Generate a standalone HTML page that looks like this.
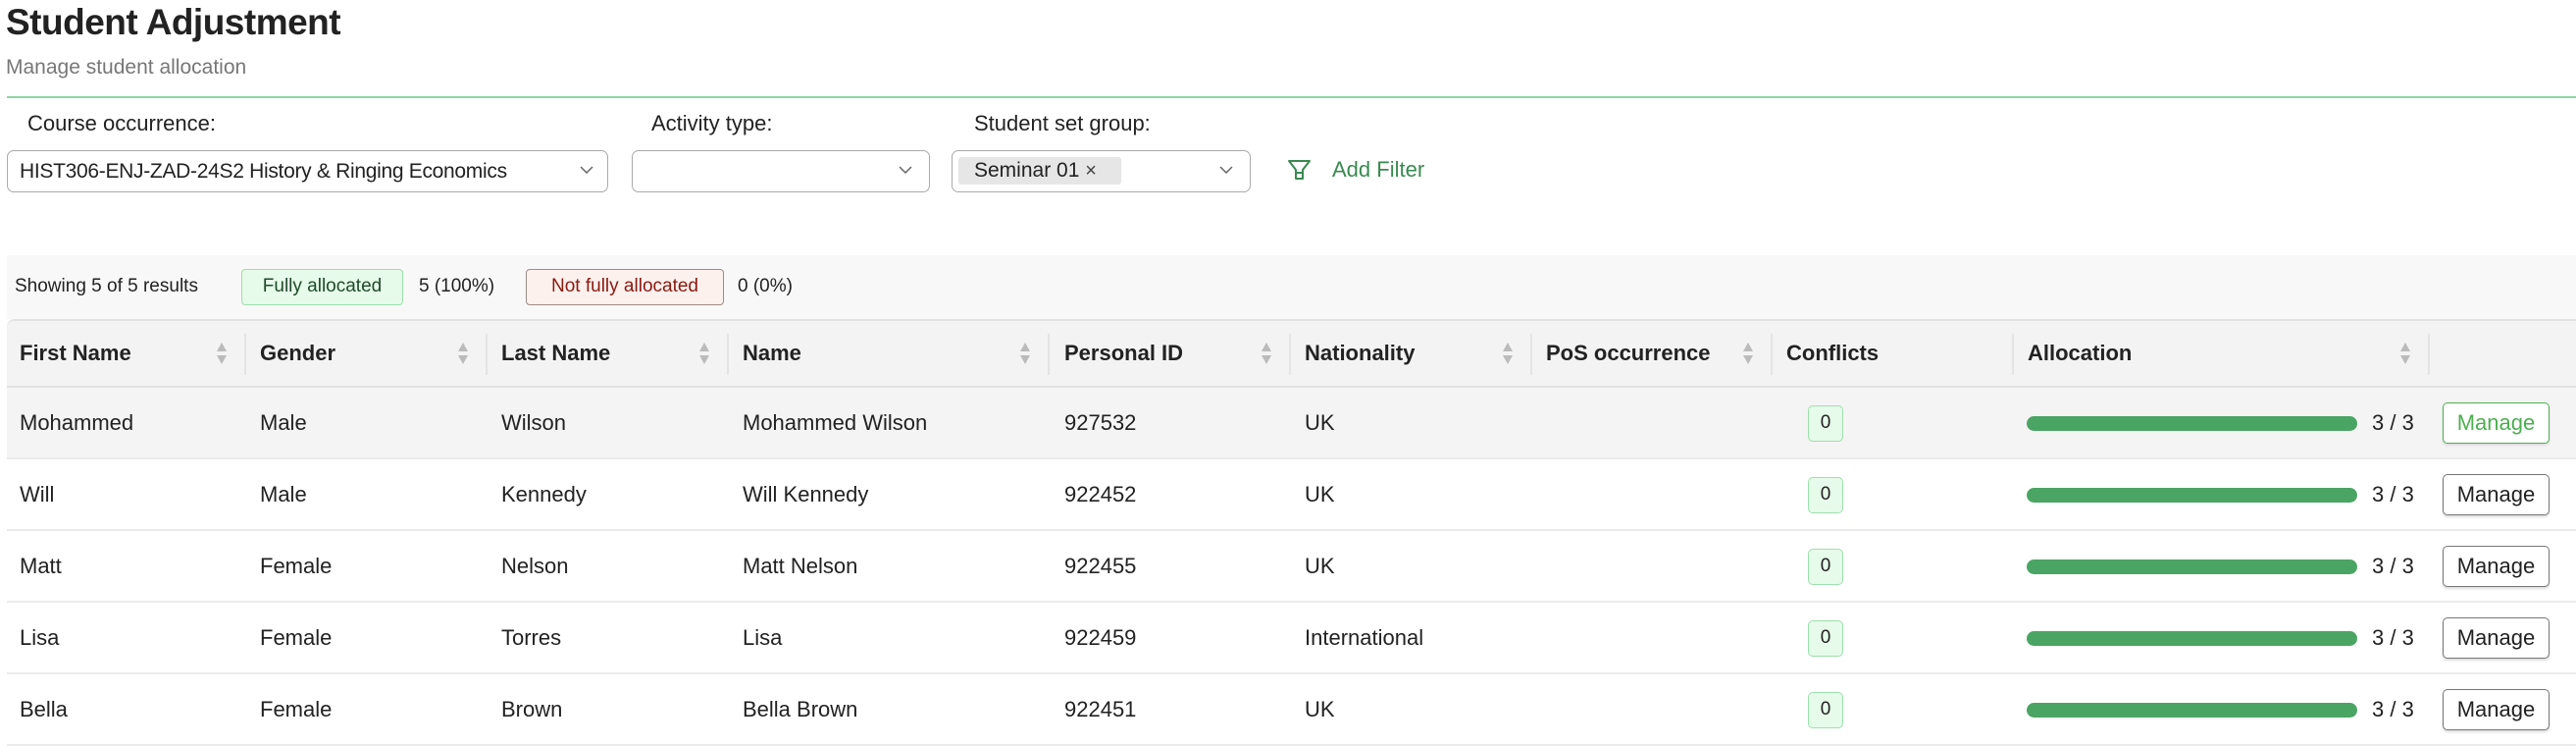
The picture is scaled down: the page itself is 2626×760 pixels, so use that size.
<!DOCTYPE html>
<html><head><meta charset="utf-8"><style>
*{margin:0;padding:0;box-sizing:border-box}
body{width:2626px;height:760px;background:#fff;font-family:"Liberation Sans",sans-serif;color:#222;position:relative;overflow:hidden}
.a{position:absolute;white-space:nowrap}
.sel{position:absolute;border:1.5px solid #aaa;border-radius:7px;background:#fff;height:43px;top:153px}
.chev{position:absolute;top:12px;width:14px;height:14px}
.hd{position:absolute;top:325px;height:70px;left:7px;right:0;background:#f3f3f3;border-top:2px solid #e2e2e2;border-bottom:2px solid #e2e2e2;border-radius:8px 0 0 0}
.ht{position:absolute;top:347px;font-weight:bold;font-size:22px}
.sep{position:absolute;top:340px;width:2px;height:42px;background:#e4e4e4}
.srt{position:absolute;top:348px;width:12px;height:24px}
.row{position:absolute;left:7px;right:0;height:73px;border-bottom:2px solid #ebebeb}
.c{position:absolute;font-size:22px}
.badge{position:absolute;width:36px;height:37px;background:#e6fbe9;border:1.5px solid #9ddfae;border-radius:5px;font-size:19px;text-align:center;line-height:34px}
.bar{position:absolute;width:337px;height:15px;background:#4aa564;border-radius:8px}
.btn{position:absolute;width:109px;height:42px;border:1.5px solid #777;border-radius:5px;font-size:22px;text-align:center;line-height:39px;background:#fff;box-shadow:0 2px 2px #ddd}
</style></head><body>
<div class="a" style="left:6px;top:2px;font-size:37px;font-weight:bold;color:#222;letter-spacing:-0.5px">Student Adjustment</div>
<div class="a" style="left:6px;top:57px;font-size:21px;color:#777">Manage student allocation</div>
<div class="a" style="left:7px;right:0;top:98px;height:2px;background:#8fd4a0"></div>

<div class="a" style="left:28px;top:113px;font-size:22px">Course occurrence:</div>
<div class="a" style="left:664px;top:113px;font-size:22px">Activity type:</div>
<div class="a" style="left:993px;top:113px;font-size:22px">Student set group:</div>

<div class="sel" style="left:7px;width:613px"><div class="a" style="left:12px;top:9px;font-size:21px;letter-spacing:-0.3px">HIST306-ENJ-ZAD-24S2 History &amp; Ringing Economics</div>
<svg class="chev" style="right:14px" viewBox="0 0 14 14"><path d="M1 4l6 6 6-6" fill="none" stroke="#666" stroke-width="1.5"/></svg></div>
<div class="sel" style="left:644px;width:304px"><svg class="chev" style="right:17px" viewBox="0 0 14 14"><path d="M1 4l6 6 6-6" fill="none" stroke="#666" stroke-width="1.5"/></svg></div>
<div class="sel" style="left:970px;width:305px"><div class="a" style="left:6px;top:6px;width:166px;height:28px;background:#e6e6e6;border-radius:3px;font-size:21px;line-height:28px;padding-left:16px">Seminar 01 <span style="font-size:20px;color:#444">×</span></div>
<svg class="chev" style="right:17px" viewBox="0 0 14 14"><path d="M1 4l6 6 6-6" fill="none" stroke="#666" stroke-width="1.5"/></svg></div>

<svg class="a" style="left:1312px;top:162px" width="26" height="24" viewBox="0 0 26 24"><path d="M2 2h21l-7 9v9h-7v-9z" fill="none" stroke="#3a8a50" stroke-width="2" stroke-linejoin="round"/><path d="M9 14h7" stroke="#3a8a50" stroke-width="2"/></svg>
<div class="a" style="left:1358px;top:160px;font-size:22px;color:#3a8a50">Add Filter</div>

<div class="a" style="left:7px;right:0;top:260px;height:65px;background:#f8f8f8"></div>
<div class="a" style="left:15px;top:281px;font-size:19px">Showing 5 of 5 results</div>
<div class="a" style="left:246px;top:274px;width:165px;height:37px;background:#e6fbe9;border:1.5px solid #9ddfae;border-radius:4px;font-size:19px;line-height:34px;text-align:center;color:#1f4a2a">Fully allocated</div>
<div class="a" style="left:427px;top:281px;font-size:19px">5 (100%)</div>
<div class="a" style="left:536px;top:274px;width:202px;height:37px;background:#fdf1ee;border:1.5px solid #a08a86;border-radius:4px;font-size:19px;line-height:34px;text-align:center;color:#8a1a10">Not fully allocated</div>
<div class="a" style="left:752px;top:281px;font-size:19px">0 (0%)</div>

<div class="hd"></div>
<div class="ht" style="left:20px">First Name</div>
<div class="ht" style="left:265px">Gender</div>
<div class="ht" style="left:511px">Last Name</div>
<div class="ht" style="left:757px">Name</div>
<div class="ht" style="left:1085px">Personal ID</div>
<div class="ht" style="left:1330px">Nationality</div>
<div class="ht" style="left:1576px">PoS occurrence</div>
<div class="ht" style="left:1821px">Conflicts</div>
<div class="ht" style="left:2067px">Allocation</div>
<div class="sep" style="left:249px"></div><div class="sep" style="left:495px"></div><div class="sep" style="left:741px"></div><div class="sep" style="left:1068px"></div><div class="sep" style="left:1314px"></div><div class="sep" style="left:1560px"></div><div class="sep" style="left:1805px"></div><div class="sep" style="left:2051px"></div><div class="sep" style="left:2475px"></div>
<svg class="srt" style="left:220px" viewBox="0 0 12 24"><path d="M6 1l5 9H1z M6 23l5-9H1z" fill="#bbb"/></svg>
<svg class="srt" style="left:466px" viewBox="0 0 12 24"><path d="M6 1l5 9H1z M6 23l5-9H1z" fill="#bbb"/></svg>
<svg class="srt" style="left:712px" viewBox="0 0 12 24"><path d="M6 1l5 9H1z M6 23l5-9H1z" fill="#bbb"/></svg>
<svg class="srt" style="left:1039px" viewBox="0 0 12 24"><path d="M6 1l5 9H1z M6 23l5-9H1z" fill="#bbb"/></svg>
<svg class="srt" style="left:1285px" viewBox="0 0 12 24"><path d="M6 1l5 9H1z M6 23l5-9H1z" fill="#bbb"/></svg>
<svg class="srt" style="left:1531px" viewBox="0 0 12 24"><path d="M6 1l5 9H1z M6 23l5-9H1z" fill="#bbb"/></svg>
<svg class="srt" style="left:1776px" viewBox="0 0 12 24"><path d="M6 1l5 9H1z M6 23l5-9H1z" fill="#bbb"/></svg>
<svg class="srt" style="left:2446px" viewBox="0 0 12 24"><path d="M6 1l5 9H1z M6 23l5-9H1z" fill="#bbb"/></svg>

<div class="row" style="top:395px;background:#f4f4f4"></div>
<div class="row" style="top:468px"></div>
<div class="row" style="top:541px"></div>
<div class="row" style="top:614px"></div>
<div class="row" style="top:687px"></div>

<div class="c" style="left:20px;top:418px">Mohammed</div><div class="c" style="left:265px;top:418px">Male</div><div class="c" style="left:511px;top:418px">Wilson</div><div class="c" style="left:757px;top:418px">Mohammed Wilson</div><div class="c" style="left:1085px;top:418px">927532</div><div class="c" style="left:1330px;top:418px">UK</div>
<div class="badge" style="left:1843px;top:413px">0</div><div class="bar" style="left:2066px;top:424px"></div><div class="c" style="left:2418px;top:418px">3 / 3</div><div class="btn" style="left:2490px;top:410px;border-color:#4caf50;color:#4caf50">Manage</div>

<div class="c" style="left:20px;top:491px">Will</div><div class="c" style="left:265px;top:491px">Male</div><div class="c" style="left:511px;top:491px">Kennedy</div><div class="c" style="left:757px;top:491px">Will Kennedy</div><div class="c" style="left:1085px;top:491px">922452</div><div class="c" style="left:1330px;top:491px">UK</div>
<div class="badge" style="left:1843px;top:486px">0</div><div class="bar" style="left:2066px;top:497px"></div><div class="c" style="left:2418px;top:491px">3 / 3</div><div class="btn" style="left:2490px;top:483px">Manage</div>

<div class="c" style="left:20px;top:564px">Matt</div><div class="c" style="left:265px;top:564px">Female</div><div class="c" style="left:511px;top:564px">Nelson</div><div class="c" style="left:757px;top:564px">Matt Nelson</div><div class="c" style="left:1085px;top:564px">922455</div><div class="c" style="left:1330px;top:564px">UK</div>
<div class="badge" style="left:1843px;top:559px">0</div><div class="bar" style="left:2066px;top:570px"></div><div class="c" style="left:2418px;top:564px">3 / 3</div><div class="btn" style="left:2490px;top:556px">Manage</div>

<div class="c" style="left:20px;top:637px">Lisa</div><div class="c" style="left:265px;top:637px">Female</div><div class="c" style="left:511px;top:637px">Torres</div><div class="c" style="left:757px;top:637px">Lisa</div><div class="c" style="left:1085px;top:637px">922459</div><div class="c" style="left:1330px;top:637px">International</div>
<div class="badge" style="left:1843px;top:632px">0</div><div class="bar" style="left:2066px;top:643px"></div><div class="c" style="left:2418px;top:637px">3 / 3</div><div class="btn" style="left:2490px;top:629px">Manage</div>

<div class="c" style="left:20px;top:710px">Bella</div><div class="c" style="left:265px;top:710px">Female</div><div class="c" style="left:511px;top:710px">Brown</div><div class="c" style="left:757px;top:710px">Bella Brown</div><div class="c" style="left:1085px;top:710px">922451</div><div class="c" style="left:1330px;top:710px">UK</div>
<div class="badge" style="left:1843px;top:705px">0</div><div class="bar" style="left:2066px;top:716px"></div><div class="c" style="left:2418px;top:710px">3 / 3</div><div class="btn" style="left:2490px;top:702px">Manage</div>
</body></html>
